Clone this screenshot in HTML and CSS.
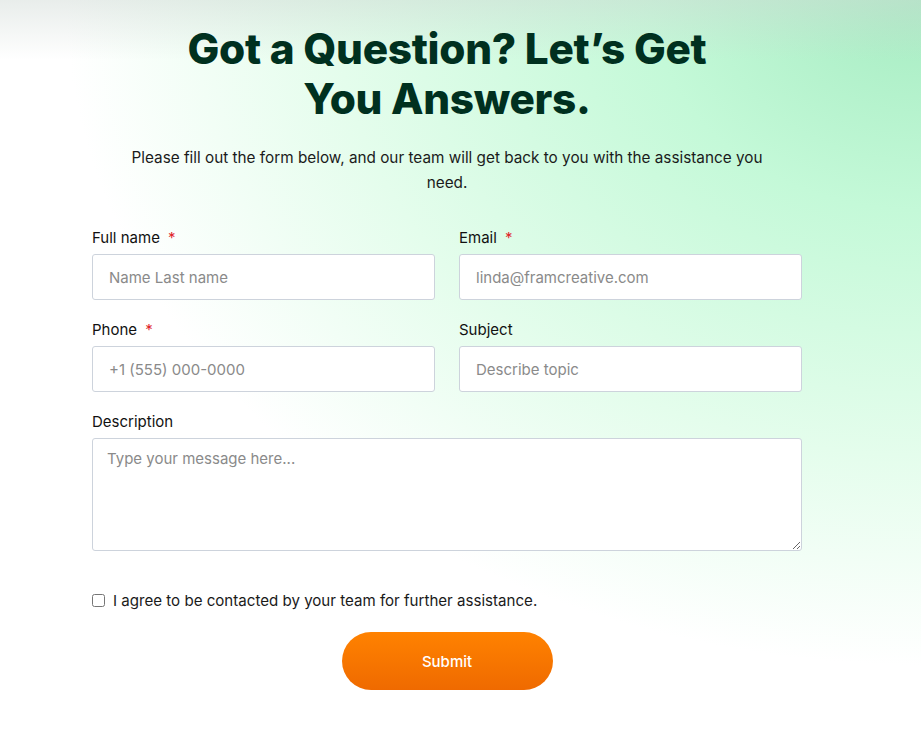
FILE: index.html
```html
<!DOCTYPE html>
<html lang="en">
  <head>
    <meta charset="UTF-8" />
    <meta name="viewport" content="width=device-width, initial-scale=1.0" />
    <title>Contact</title>
    <link rel="stylesheet" href="styles.css">
  </head>
  <body>
    <section class="contact">
      <h1>Got a Question? Let’s Get You Answers.</h1>
      <p class="intro">
        Please fill out the form below, and our team will get back to you with the assistance you need.
      </p>

      <form class="contact-form">
        <div class="row">
          <div class="field">
            <label for="fullname">Full name <span class="req">*</span></label>
            <input type="text" id="fullname" placeholder="Name Last name" />
          </div>
          <div class="field">
            <label for="email">Email <span class="req">*</span></label>
            <input type="email" id="email" placeholder="linda@framcreative.com" />
          </div>
        </div>

        <div class="row">
          <div class="field">
            <label for="phone">Phone <span class="req">*</span></label>
            <input type="tel" id="phone" placeholder="+1 (555) 000-0000" />
          </div>
          <div class="field">
            <label for="subject">Subject</label>
            <input type="text" id="subject" placeholder="Describe topic" />
          </div>
        </div>

        <div class="field">
          <label for="description">Description</label>
          <textarea id="description" placeholder="Type your message here..."></textarea>
        </div>

        <label class="agree">
          <input type="checkbox" />
          I agree to be contacted by your team for further assistance.
        </label>

        <div class="button-container">
          <button type="submit" class="submit-btn">Submit</button>
        </div>
      </form>
    </section>
  </body>
</html>
```

FILE: styles.css
```css
html {
  height: 100%;
}
body {
  margin: 0;
  min-height: 100%;
  font-family: Inter, "Noto Sans", sans-serif;
  color: #111;
  background:
    linear-gradient(to bottom, rgba(205, 215, 210, 0.45), rgba(255, 255, 255, 0) 60px),
    radial-gradient(ellipse 900px 700px at 100% 0%, #a6ecc2 0%, #c4f9d8 30%, #e4fdec 65%, #ffffff 95%);
  background-color: #fff;
  background-attachment: fixed;
}
.contact {
  width: 710px;
  margin-left: 92px;
  padding-top: 24px;
  padding-bottom: 40px;
}
h1 {
  margin: 0 auto;
  max-width: 560px;
  text-align: center;
  font-size: 42.3px;
  line-height: 50px;
  font-weight: 800;
  letter-spacing: -0.3px;
  color: #00301f;
}
.intro {
  margin: 21px auto 0;
  max-width: 660px;
  text-align: center;
  font-size: 15.3px;
  line-height: 25px;
  color: #1b1b1b;
}
.contact-form {
  margin-top: 33px;
}
.row {
  display: flex;
  gap: 24px;
}
.row .field {
  flex: 1;
}
.field {
  margin-bottom: 20px;
}
.field label {
  display: block;
  font-size: 15px;
  line-height: 20px;
  margin-bottom: 6px;
}
.req {
  color: #e0262b;
  margin-left: 4px;
}
input[type="text"],
input[type="email"],
input[type="tel"],
textarea {
  display: block;
  box-sizing: border-box;
  width: 100%;
  height: 46px;
  padding: 0 16px;
  border: 1px solid #cdd3dc;
  border-radius: 3px;
  background: #fff;
  font-family: inherit;
  font-size: 15px;
  color: #111;
}
textarea {
  height: 113px;
  padding: 10px 14px;
  resize: vertical;
}
::placeholder {
  color: #8a8a8a;
}
.agree {
  display: flex;
  align-items: center;
  gap: 8px;
  margin-top: 40px;
  font-size: 15.1px;
  color: #1a1a1a;
}
.agree input {
  margin: 0;
  width: 13px;
  height: 13px;
}
.button-container {
  display: flex;
  justify-content: center;
  margin-top: 22px;
}
.submit-btn {
  width: 211px;
  height: 58px;
  border: none;
  border-radius: 29px;
  background: linear-gradient(to bottom, #ff8200, #ef6a00);
  color: #fff;
  font-family: inherit;
  font-size: 15px;
  font-weight: 500;
  cursor: pointer;
}
```
